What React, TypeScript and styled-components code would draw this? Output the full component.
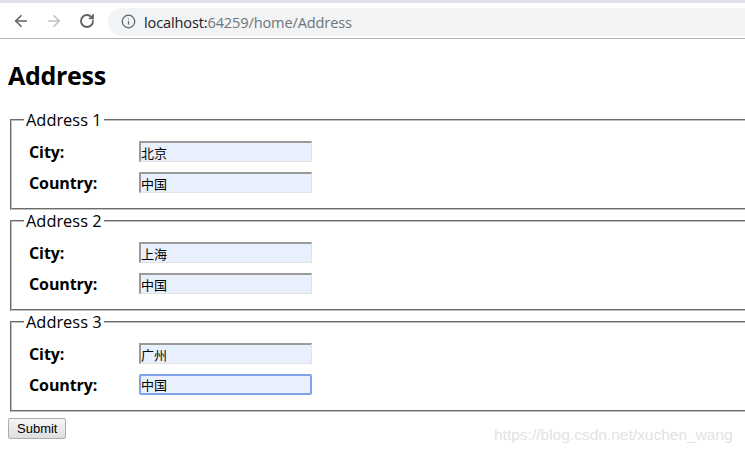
import React from 'react'
import styled, { createGlobalStyle } from 'styled-components'
import { ArrowLeft, ArrowRight, RotateCw, Info } from 'lucide-react'

const GlobalStyle = createGlobalStyle`
	html, body {
		margin: 0;
		padding: 0;
		background: #fff;
		overflow: hidden;
	}
	body {
		font-family: 'Open Sans', 'Noto Sans', sans-serif;
		color: #000;
	}
`

const addresses = [
	{ id: 1, city: '北京', country: '中国' },
	{ id: 2, city: '上海', country: '中国' },
	{ id: 3, city: '广州', country: '中国' },
]

const App = () => {
	return (
		<>
			<GlobalStyle />
			<Window>
				<TopStrip />
				<Toolbar>
					<NavButton>
						<ArrowLeft size={18} strokeWidth={2.2} />
					</NavButton>
					<NavButton disabled>
						<ArrowRight size={18} strokeWidth={2.2} />
					</NavButton>
					<NavButton>
						<RotateCw size={16} strokeWidth={2.8} />
					</NavButton>
					<Omnibox>
						<Info size={15} strokeWidth={2} />
						<UrlText>
							localhost:<UrlPath>64259/home/Address</UrlPath>
						</UrlText>
					</Omnibox>
				</Toolbar>
				<Page>
					<Heading>Address</Heading>
					<form onSubmit={(e) => e.preventDefault()}>
						{addresses.map((a, i) => {
							const last = i === addresses.length - 1
							return (
								<AddressSet key={a.id}>
									<Legend>Address {a.id}</Legend>
									<FieldGrid>
										<Label>City:</Label>
										<TextInput defaultValue={a.city} />
										<Label>Country:</Label>
										<TextInput
											defaultValue={a.country}
											$focused={last}
											autoFocus={last}
										/>
									</FieldGrid>
								</AddressSet>
							)
						})}
						<SubmitRow>
							<SubmitButton type="submit">Submit</SubmitButton>
						</SubmitRow>
					</form>
				</Page>
				<Watermark>https://blog.csdn.net/xuchen_wang</Watermark>
			</Window>
		</>
	)
}

const Window = styled.div`
	position: relative;
	width: 745px;
	height: 453px;
	overflow: hidden;
`

const TopStrip = styled.div`
	height: 3px;
	background: #dee1e6;
`

const Toolbar = styled.div`
	display: flex;
	align-items: center;
	height: 35px;
	padding-left: 12px;
	border-bottom: 1px solid #b5b5b5;
	background: #fff;
`

const NavButton = styled.div<{ disabled?: boolean }>`
	display: flex;
	align-items: center;
	justify-content: center;
	width: 18px;
	height: 18px;
	margin-right: 15px;
	color: ${(props) => (props.disabled ? '#bdc1c6' : '#5f6368')};
`

const Omnibox = styled.div`
	display: flex;
	align-items: center;
	gap: 8px;
	flex: 1;
	height: 28px;
	margin-left: -3px;
	padding-left: 13px;
	margin-top: 2px;
	border-radius: 14px 0 0 14px;
	background: #f1f3f4;
	color: #5f6368;
`

const UrlText = styled.span`
	font-family: 'Open Sans', sans-serif;
	font-size: 14.6px;
	color: #202124;
	letter-spacing: -0.15px;
`

const UrlPath = styled.span`
	color: #70757a;
`

const Page = styled.div`
	padding: 0 8px;
`

const Heading = styled.h2`
	margin: 20px 0 18px;
	font-size: 25px;
	line-height: 32px;
	font-weight: 700;
	letter-spacing: -0.3px;
`

const AddressSet = styled.fieldset`
	width: 800px;
	margin: 0 2px;
	padding: 10px 12px 15px 17px;
	border: 2px groove #c0c0c0;
	min-inline-size: auto;
`

const Legend = styled.legend`
	padding: 0 2px;
	margin-left: -5px;
	font-size: 16.4px;
	line-height: 22px;
	color: #000;
`

const FieldGrid = styled.div`
	display: grid;
	grid-template-columns: 110px 173px;
	grid-auto-rows: 21px;
	row-gap: 10px;
	align-items: center;
`

const Label = styled.label`
	font-size: 16px;
	font-weight: 700;
	letter-spacing: -0.1px;
`

const TextInput = styled.input<{ $focused?: boolean }>`
	box-sizing: border-box;
	width: 173px;
	height: 21px;
	margin: 0;
	padding: 0;
	font-family: 'Noto Sans CJK SC', sans-serif;
	font-size: 13px;
	color: #000;
	caret-color: #000;
	background: #e8f0fe;
	outline: none;
	border-style: solid;
	border-width: ${(props) => (props.$focused ? '2px' : '2px 1px 1px 2px')};
	border-color: ${(props) =>
		props.$focused ? '#7ea3e8' : '#9a9a9a #e3e3e3 #e3e3e3 #9a9a9a'};
	border-radius: ${(props) => (props.$focused ? '2px' : '0')};
`

const SubmitRow = styled.div`
	margin-top: 4px;
`

const SubmitButton = styled.button`
	height: 21px;
	padding: 0 8px;
	font-family: 'Liberation Sans', Arial, sans-serif;
	font-size: 13px;
	color: #000;
	border: 1px solid #adadad;
	border-radius: 2px;
	background: linear-gradient(#f6f6f6, #dedede);
`

const Watermark = styled.div`
	position: absolute;
	left: 494px;
	top: 426px;
	font-family: 'Liberation Sans', Arial, sans-serif;
	font-size: 15.5px;
	color: #e2e2e2;
	pointer-events: none;
`

export default App
